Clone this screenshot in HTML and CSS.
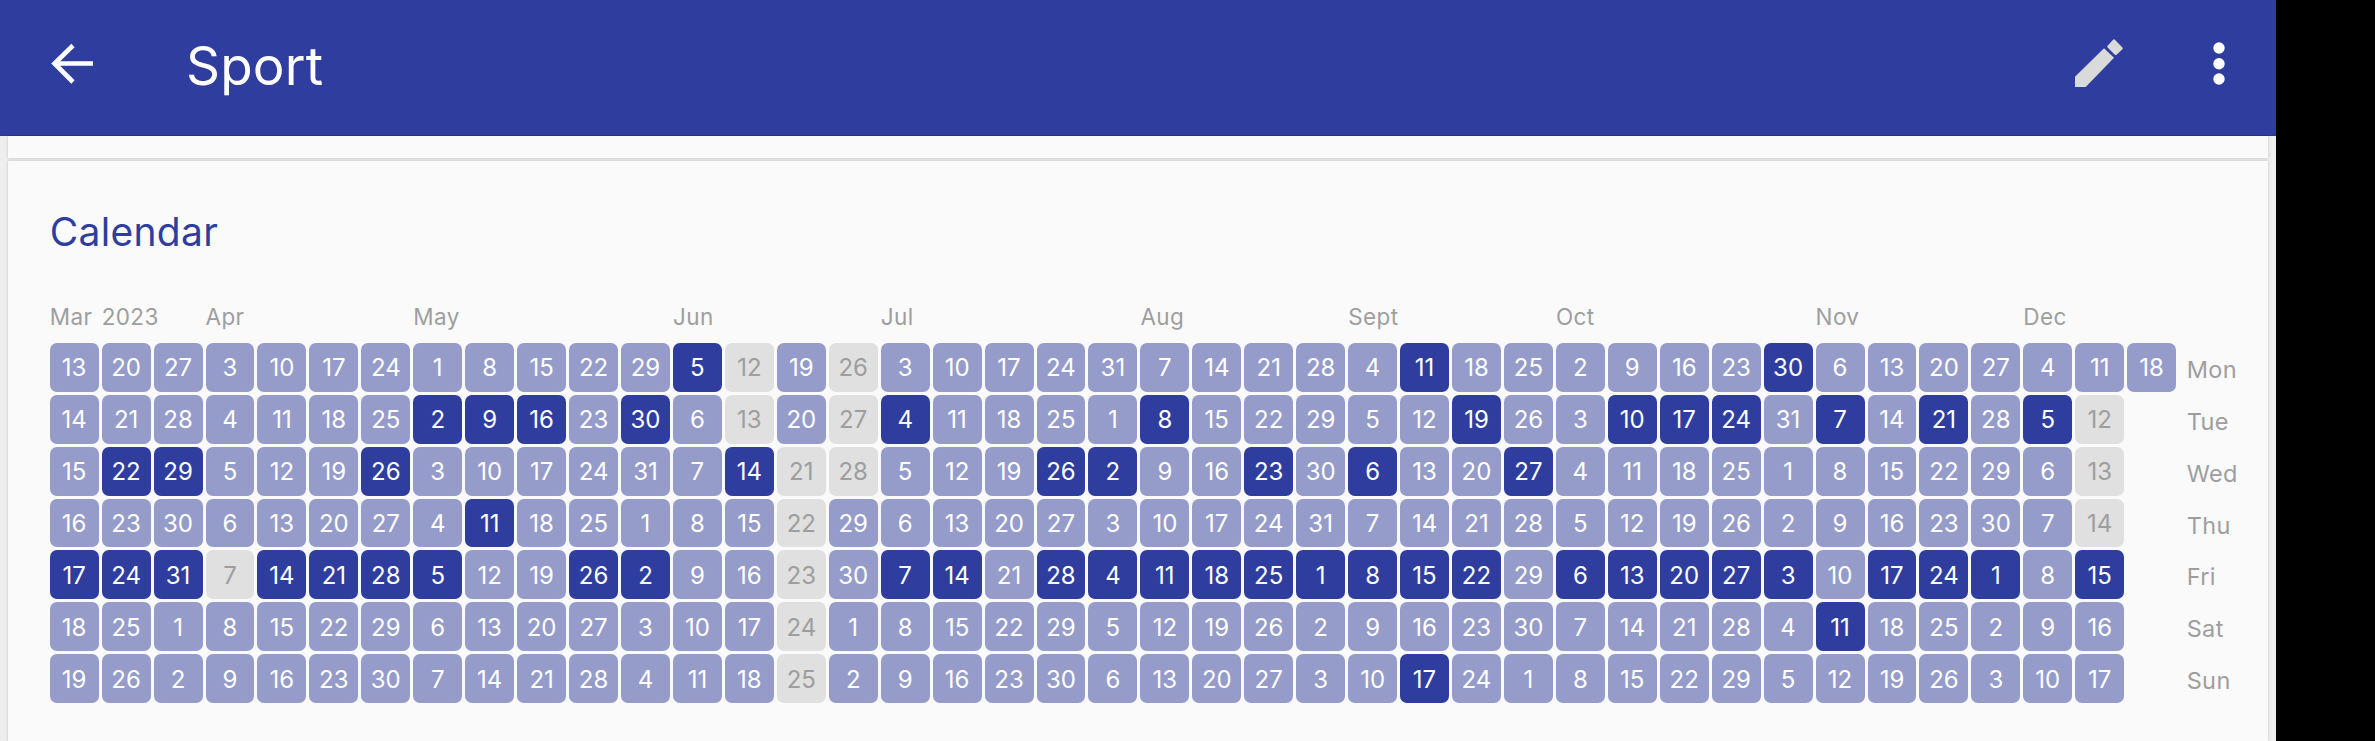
FILE: index.html
```html
<!DOCTYPE html>
<html lang="en">
<head>
  <meta charset="UTF-8" />
  <meta name="viewport" content="width=device-width, initial-scale=1.0" />
  <title>Sport</title>
  <link rel="stylesheet" href="styles.css">
</head>
<body>
  <div class="app">
    <header class="toolbar">
      <svg class="icon-back" viewBox="0 0 44 44"><path d="M42 21.5H5M22 3.5L3.5 21.5L22 40"/></svg>
      <h1>Sport</h1>
      <svg class="icon-edit" viewBox="0 0 52 52"><path d="M3 49V38.7L32 10.3L42 19.7L13.7 49Z"/><path class="cap" d="M42 2.5L49.5 10.3L43.7 15.8L36.5 8.7Z"/></svg>
      <svg class="icon-more" viewBox="0 0 12 44"><circle cx="6" cy="6" r="5.7"/><circle cx="6" cy="21.7" r="5.7"/><circle cx="6" cy="37" r="5.7"/></svg>
    </header>
    <main class="content">
      <div class="card stub"></div>
      <section class="card calendar">
        <h2>Calendar</h2>
        <div class="months">
          <span class="mar">Mar</span><span class="year">2023</span><span class="apr">Apr</span><span class="may">May</span><span class="jun">Jun</span><span class="jul">Jul</span><span class="aug">Aug</span><span class="sep">Sept</span><span class="oct">Oct</span><span class="nov">Nov</span><span class="dec">Dec</span>
        </div>
        <div class="days">
          <!-- Mon -->
          <span class="day">13</span><span class="day">20</span><span class="day">27</span><span class="day">3</span><span class="day">10</span><span class="day">17</span><span class="day">24</span><span class="day">1</span><span class="day">8</span><span class="day">15</span><span class="day">22</span><span class="day">29</span><span class="day on">5</span><span class="day off">12</span><span class="day">19</span><span class="day off">26</span><span class="day">3</span><span class="day">10</span><span class="day">17</span><span class="day">24</span><span class="day">31</span><span class="day">7</span><span class="day">14</span><span class="day">21</span><span class="day">28</span><span class="day">4</span><span class="day on">11</span><span class="day">18</span><span class="day">25</span><span class="day">2</span><span class="day">9</span><span class="day">16</span><span class="day">23</span><span class="day on">30</span><span class="day">6</span><span class="day">13</span><span class="day">20</span><span class="day">27</span><span class="day">4</span><span class="day">11</span><span class="day">18</span><span class="wd">Mon</span>
          <!-- Tue -->
          <span class="day">14</span><span class="day">21</span><span class="day">28</span><span class="day">4</span><span class="day">11</span><span class="day">18</span><span class="day">25</span><span class="day on">2</span><span class="day on">9</span><span class="day on">16</span><span class="day">23</span><span class="day on">30</span><span class="day">6</span><span class="day off">13</span><span class="day">20</span><span class="day off">27</span><span class="day on">4</span><span class="day">11</span><span class="day">18</span><span class="day">25</span><span class="day">1</span><span class="day on">8</span><span class="day">15</span><span class="day">22</span><span class="day">29</span><span class="day">5</span><span class="day">12</span><span class="day on">19</span><span class="day">26</span><span class="day">3</span><span class="day on">10</span><span class="day on">17</span><span class="day on">24</span><span class="day">31</span><span class="day on">7</span><span class="day">14</span><span class="day on">21</span><span class="day">28</span><span class="day on">5</span><span class="day off">12</span><span class="wd">Tue</span>
          <!-- Wed -->
          <span class="day">15</span><span class="day on">22</span><span class="day on">29</span><span class="day">5</span><span class="day">12</span><span class="day">19</span><span class="day on">26</span><span class="day">3</span><span class="day">10</span><span class="day">17</span><span class="day">24</span><span class="day">31</span><span class="day">7</span><span class="day on">14</span><span class="day off">21</span><span class="day off">28</span><span class="day">5</span><span class="day">12</span><span class="day">19</span><span class="day on">26</span><span class="day on">2</span><span class="day">9</span><span class="day">16</span><span class="day on">23</span><span class="day">30</span><span class="day on">6</span><span class="day">13</span><span class="day">20</span><span class="day on">27</span><span class="day">4</span><span class="day">11</span><span class="day">18</span><span class="day">25</span><span class="day">1</span><span class="day">8</span><span class="day">15</span><span class="day">22</span><span class="day">29</span><span class="day">6</span><span class="day off">13</span><span class="wd">Wed</span>
          <!-- Thu -->
          <span class="day">16</span><span class="day">23</span><span class="day">30</span><span class="day">6</span><span class="day">13</span><span class="day">20</span><span class="day">27</span><span class="day">4</span><span class="day on">11</span><span class="day">18</span><span class="day">25</span><span class="day">1</span><span class="day">8</span><span class="day">15</span><span class="day off">22</span><span class="day">29</span><span class="day">6</span><span class="day">13</span><span class="day">20</span><span class="day">27</span><span class="day">3</span><span class="day">10</span><span class="day">17</span><span class="day">24</span><span class="day">31</span><span class="day">7</span><span class="day">14</span><span class="day">21</span><span class="day">28</span><span class="day">5</span><span class="day">12</span><span class="day">19</span><span class="day">26</span><span class="day">2</span><span class="day">9</span><span class="day">16</span><span class="day">23</span><span class="day">30</span><span class="day">7</span><span class="day off">14</span><span class="wd">Thu</span>
          <!-- Fri -->
          <span class="day on">17</span><span class="day on">24</span><span class="day on">31</span><span class="day off">7</span><span class="day on">14</span><span class="day on">21</span><span class="day on">28</span><span class="day on">5</span><span class="day">12</span><span class="day">19</span><span class="day on">26</span><span class="day on">2</span><span class="day">9</span><span class="day">16</span><span class="day off">23</span><span class="day">30</span><span class="day on">7</span><span class="day on">14</span><span class="day">21</span><span class="day on">28</span><span class="day on">4</span><span class="day on">11</span><span class="day on">18</span><span class="day on">25</span><span class="day on">1</span><span class="day on">8</span><span class="day on">15</span><span class="day on">22</span><span class="day">29</span><span class="day on">6</span><span class="day on">13</span><span class="day on">20</span><span class="day on">27</span><span class="day on">3</span><span class="day">10</span><span class="day on">17</span><span class="day on">24</span><span class="day on">1</span><span class="day">8</span><span class="day on">15</span><span class="wd">Fri</span>
          <!-- Sat -->
          <span class="day">18</span><span class="day">25</span><span class="day">1</span><span class="day">8</span><span class="day">15</span><span class="day">22</span><span class="day">29</span><span class="day">6</span><span class="day">13</span><span class="day">20</span><span class="day">27</span><span class="day">3</span><span class="day">10</span><span class="day">17</span><span class="day off">24</span><span class="day">1</span><span class="day">8</span><span class="day">15</span><span class="day">22</span><span class="day">29</span><span class="day">5</span><span class="day">12</span><span class="day">19</span><span class="day">26</span><span class="day">2</span><span class="day">9</span><span class="day">16</span><span class="day">23</span><span class="day">30</span><span class="day">7</span><span class="day">14</span><span class="day">21</span><span class="day">28</span><span class="day">4</span><span class="day on">11</span><span class="day">18</span><span class="day">25</span><span class="day">2</span><span class="day">9</span><span class="day">16</span><span class="wd">Sat</span>
          <!-- Sun -->
          <span class="day">19</span><span class="day">26</span><span class="day">2</span><span class="day">9</span><span class="day">16</span><span class="day">23</span><span class="day">30</span><span class="day">7</span><span class="day">14</span><span class="day">21</span><span class="day">28</span><span class="day">4</span><span class="day">11</span><span class="day">18</span><span class="day off">25</span><span class="day">2</span><span class="day">9</span><span class="day">16</span><span class="day">23</span><span class="day">30</span><span class="day">6</span><span class="day">13</span><span class="day">20</span><span class="day">27</span><span class="day">3</span><span class="day">10</span><span class="day on">17</span><span class="day">24</span><span class="day">1</span><span class="day">8</span><span class="day">15</span><span class="day">22</span><span class="day">29</span><span class="day">5</span><span class="day">12</span><span class="day">19</span><span class="day">26</span><span class="day">3</span><span class="day">10</span><span class="day">17</span><span class="wd">Sun</span>
        </div>
      </section>
    </main>
  </div>
</body>
</html>
```
FILE: styles.css
```css
* {
  margin: 0;
  padding: 0;
  box-sizing: border-box;
}

body {
  background: #000;
  font-family: 'Inter', sans-serif;
  height: 100vh;
  overflow: hidden;
}

.app {
  width: 2276px;
  height: 100vh;
  background: #eeeeee;
  display: flex;
  flex-direction: column;
}

/* top bar */
.toolbar {
  height: 136px;
  flex: none;
  background: #2f3e9e;
  border-bottom: 1px solid #28379a;
  display: flex;
  align-items: center;
  padding: 0 0 8px 51px;
  color: #fff;
}

.toolbar h1 {
  font-size: 53px;
  font-weight: 400;
  letter-spacing: 0.2px;
  margin: 4px 0 0 91px;
}

.icon-back {
  width: 44px;
  height: 44px;
  fill: none;
  stroke: #fff;
  stroke-width: 4.6;
}

.icon-edit {
  width: 52px;
  height: 52px;
  margin-left: auto;
  fill: #d9dbdb;
}

.icon-edit .cap {
  stroke: #d9dbdb;
  stroke-width: 2.5;
  stroke-linejoin: round;
}

.icon-more {
  width: 12px;
  height: 44px;
  margin-left: 89px;
  margin-right: 51px;
  fill: #fff;
}

/* cards */
.content {
  flex: 1;
  padding: 0 8px;
  display: flex;
  flex-direction: column;
}

.card {
  background: #fafafa;
  box-shadow: 0 0 3px rgba(0, 0, 0, 0.18);
}

.stub {
  height: 22px;
  flex: none;
  margin-bottom: 3px;
}

.calendar {
  flex: 1;
  padding: 49px 0 0 41.7px;
}

.calendar h2 {
  font-size: 39px;
  font-weight: 400;
  line-height: 44px;
  letter-spacing: 0.3px;
  color: #2f3e9e;
  margin-bottom: 48px;
}

/* heatmap */
.months,
.days {
  display: grid;
  grid-template-columns: repeat(41, 48.95px) auto;
  column-gap: 3px;
}

.months {
  height: 30px;
  margin-bottom: 10.7px;
  font-size: 22.5px;
  letter-spacing: 0.4px;
  line-height: 30px;
  color: #9e9e9e;
  white-space: nowrap;
}

.year { grid-column: 2; }
.apr { grid-column: 4; }
.may { grid-column: 8; }
.jun { grid-column: 13; }
.jul { grid-column: 17; }
.aug { grid-column: 22; }
.sep { grid-column: 26; }
.oct { grid-column: 30; }
.nov { grid-column: 35; }
.dec { grid-column: 39; }

.days {
  grid-auto-rows: 48.95px;
  row-gap: 3px;
}

.day {
  background: #959cca;
  color: #fff;
  border-radius: 7px;
  font-size: 24px;
  padding-top: 1px;
  display: flex;
  align-items: center;
  justify-content: center;
}

.day.on {
  background: #2f3e9e;
}

.day.off {
  background: #e0e0e0;
  color: #9e9e9e;
}

.wd {
  grid-column: 42;
  padding: 2px 0 0 7.5px;
  font-size: 23.5px;
  letter-spacing: 0.4px;
  line-height: 49px;
  color: #9e9e9e;
}
```
